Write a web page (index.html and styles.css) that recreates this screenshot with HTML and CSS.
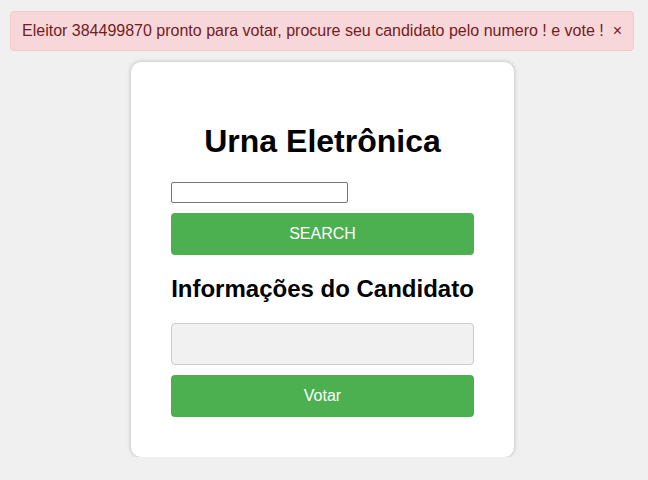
FILE: index.html
```html
<!DOCTYPE html>
<html lang="pt">
<head>
<meta charset="utf-8">
<title>Urna Eletrônica</title>
<link rel="stylesheet" href="styles.css">
</head>
<body>
  <div class="alert">
    <span class="alert-text">Eleitor 384499870 pronto para votar, procure seu candidato pelo numero ! e vote !</span>
    <span class="alert-close">×</span>
  </div>
  <div class="card">
    <h1 class="title">Urna Eletrônica</h1>
    <input class="search-input" type="text">
    <button class="btn">SEARCH</button>
    <h2 class="subtitle">Informações do Candidato</h2>
    <div class="info-box"></div>
    <button class="btn">Votar</button>
  </div>
</body>
</html>
```

FILE: styles.css
```css
html, body {
  margin: 0;
  padding: 0;
}
body {
  background: #f0f0f0;
  font-family: "Liberation Sans", Arial, sans-serif;
  padding: 11px 14px 0 10px;
}
.alert {
  display: flex;
  align-items: center;
  justify-content: space-between;
  background: #f8d7da;
  border: 1px solid #f5c6cb;
  color: #721c24;
  border-radius: 4px;
  padding: 10px 11px 10px 11px;
  font-size: 16px;
  line-height: 18px;
}
.alert-close {
  font-size: 16px;
  margin-right: 0;
}
.card {
  width: 303px;
  margin: 11px auto 0;
  background: #fff;
  border-radius: 10px;
  padding: 40px 40px 40px;
  box-shadow: 0 0 4px rgba(0,0,0,0.25);
  position: relative;
  left: 0.5px;
}
.title {
  font-size: 32px;
  text-align: center;
  margin: 21px 0 22px;
  color: #000;
}
.search-input {
  display: block;
  width: 177px;
  height: 21px;
  box-sizing: border-box;
  border: 1px solid #767676;
  border-radius: 2px;
  margin: 0 0 10px;
  padding: 1px 2px;
  font-size: 13px;
}
.btn {
  display: block;
  width: 100%;
  height: 42px;
  border: none;
  border-radius: 4px;
  background: #4caf50;
  color: #fff;
  font-family: "Liberation Sans", Arial, sans-serif;
  font-size: 16px;
  cursor: pointer;
}
.subtitle {
  font-size: 24px;
  margin: 20px 0 20px;
  color: #000;
  text-align: center;
}
.info-box {
  height: 40px;
  border: 1px solid #ccc;
  border-radius: 4px;
  background: #f1f1f1;
  margin-bottom: 10px;
}
```
